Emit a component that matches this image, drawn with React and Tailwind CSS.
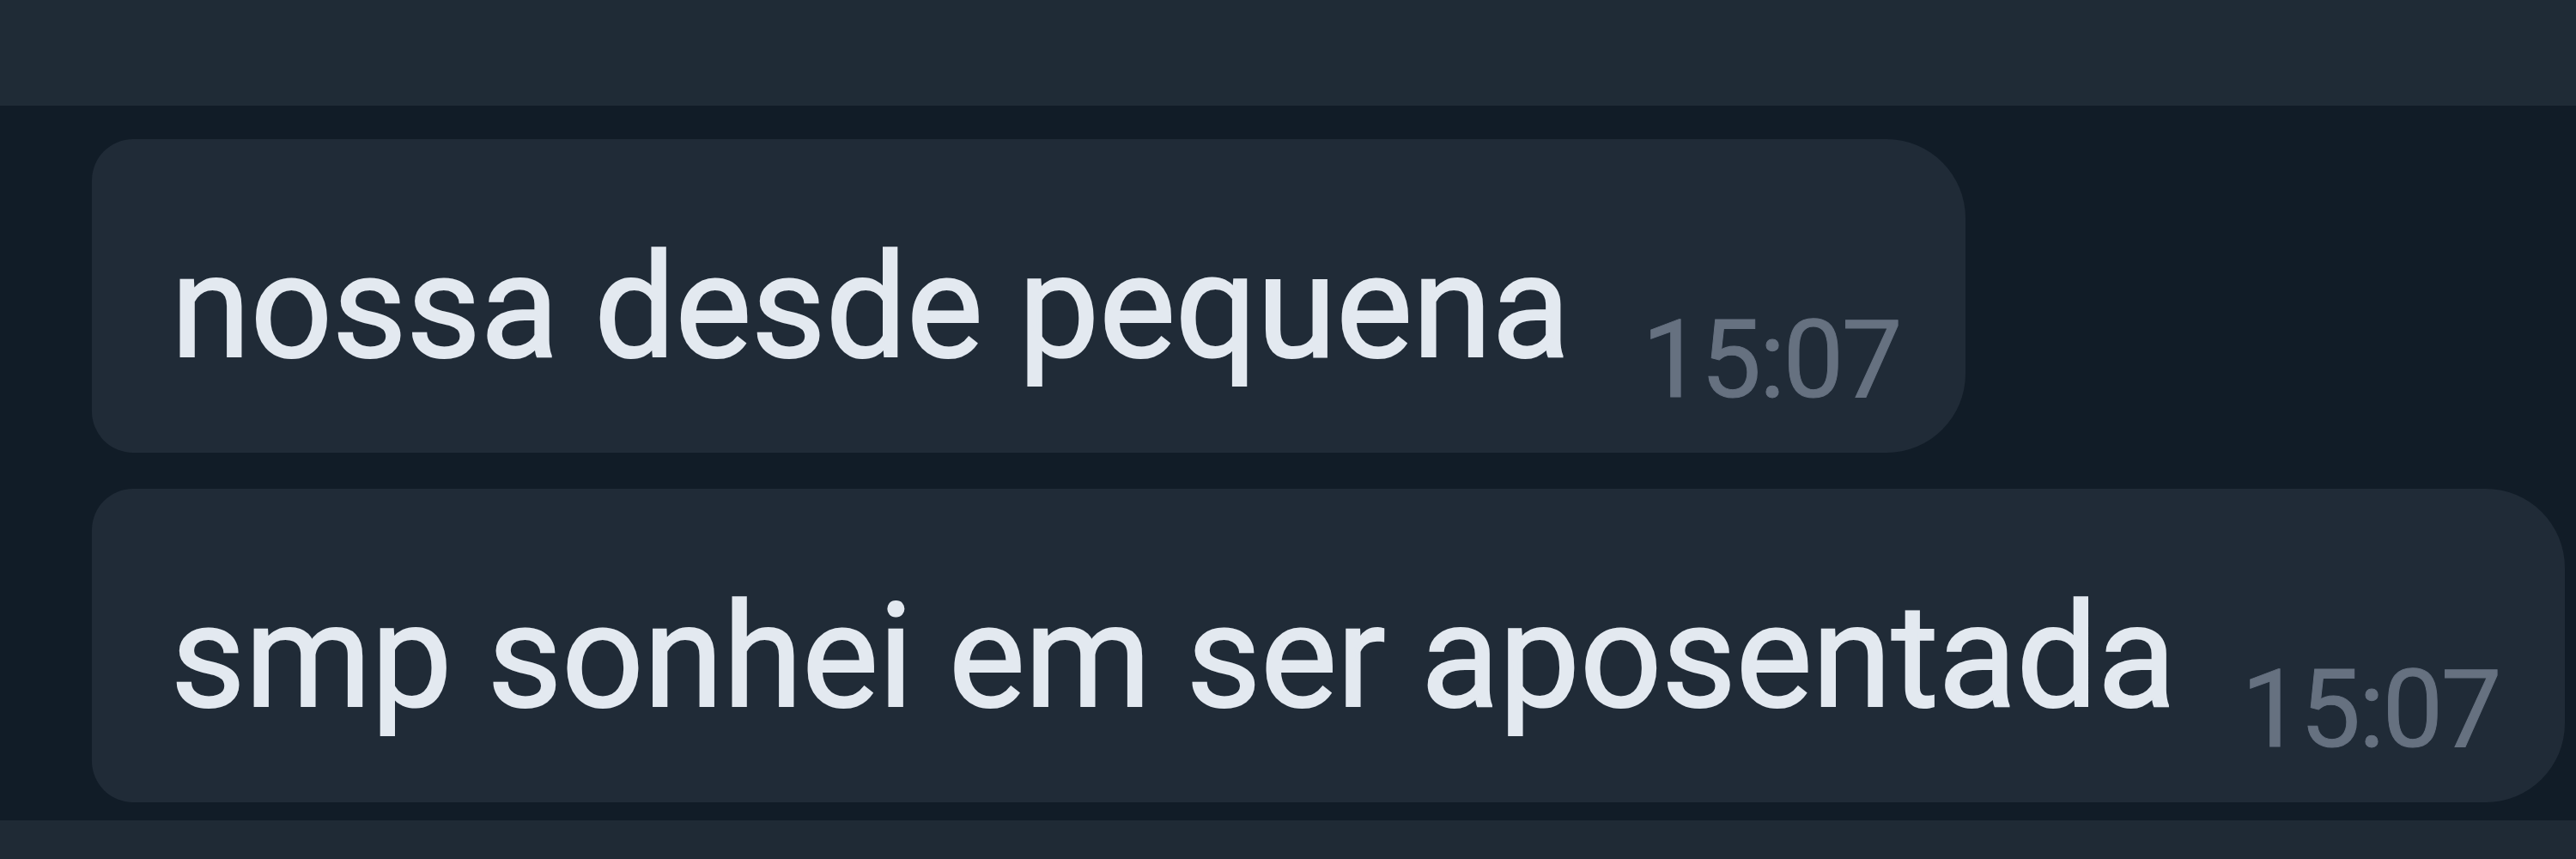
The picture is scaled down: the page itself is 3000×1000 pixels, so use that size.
const messages = [
  { id: 1, text: "nossa desde pequena", time: "15:07", size: "w-[2182px]" },
  { id: 2, text: "smp sonhei em ser aposentada", time: "15:07", size: "w-[2880px]" },
];

function Message({ text, time, size }) {
  return (
    <div className={`${size} flex h-[365px] items-start justify-between rounded-l-[48px] rounded-r-[92px] bg-[#202b37] pr-[76px] pl-[92px] whitespace-nowrap`}>
      <p className="mt-[112px] text-[168px] leading-none tracking-[-0.35px] text-[#e3e9f0] [-webkit-text-stroke:2px_#e3e9f0]">{text}</p>
      <span className="mt-[194px] text-[126px] leading-none tracking-[-2.6px] text-[#667180] [-webkit-text-stroke:1px_#667180]">{time}</span>
    </div>
  );
}

export default function App() {
  return (
    <main className="flex h-[1000px] w-[3000px] flex-col overflow-hidden bg-[#111c27] font-['Roboto',sans-serif]">
      <header className="h-[123px] shrink-0 bg-[#1f2b36]" />
      <section className="flex flex-1 flex-col gap-[42px] pt-[39px] pl-[107px]">
        {messages.map((message) => (
          <Message key={message.id} text={message.text} time={message.time} size={message.size} />
        ))}
      </section>
      <footer className="h-[45px] shrink-0 bg-[#1f2a35]" />
    </main>
  );
}
